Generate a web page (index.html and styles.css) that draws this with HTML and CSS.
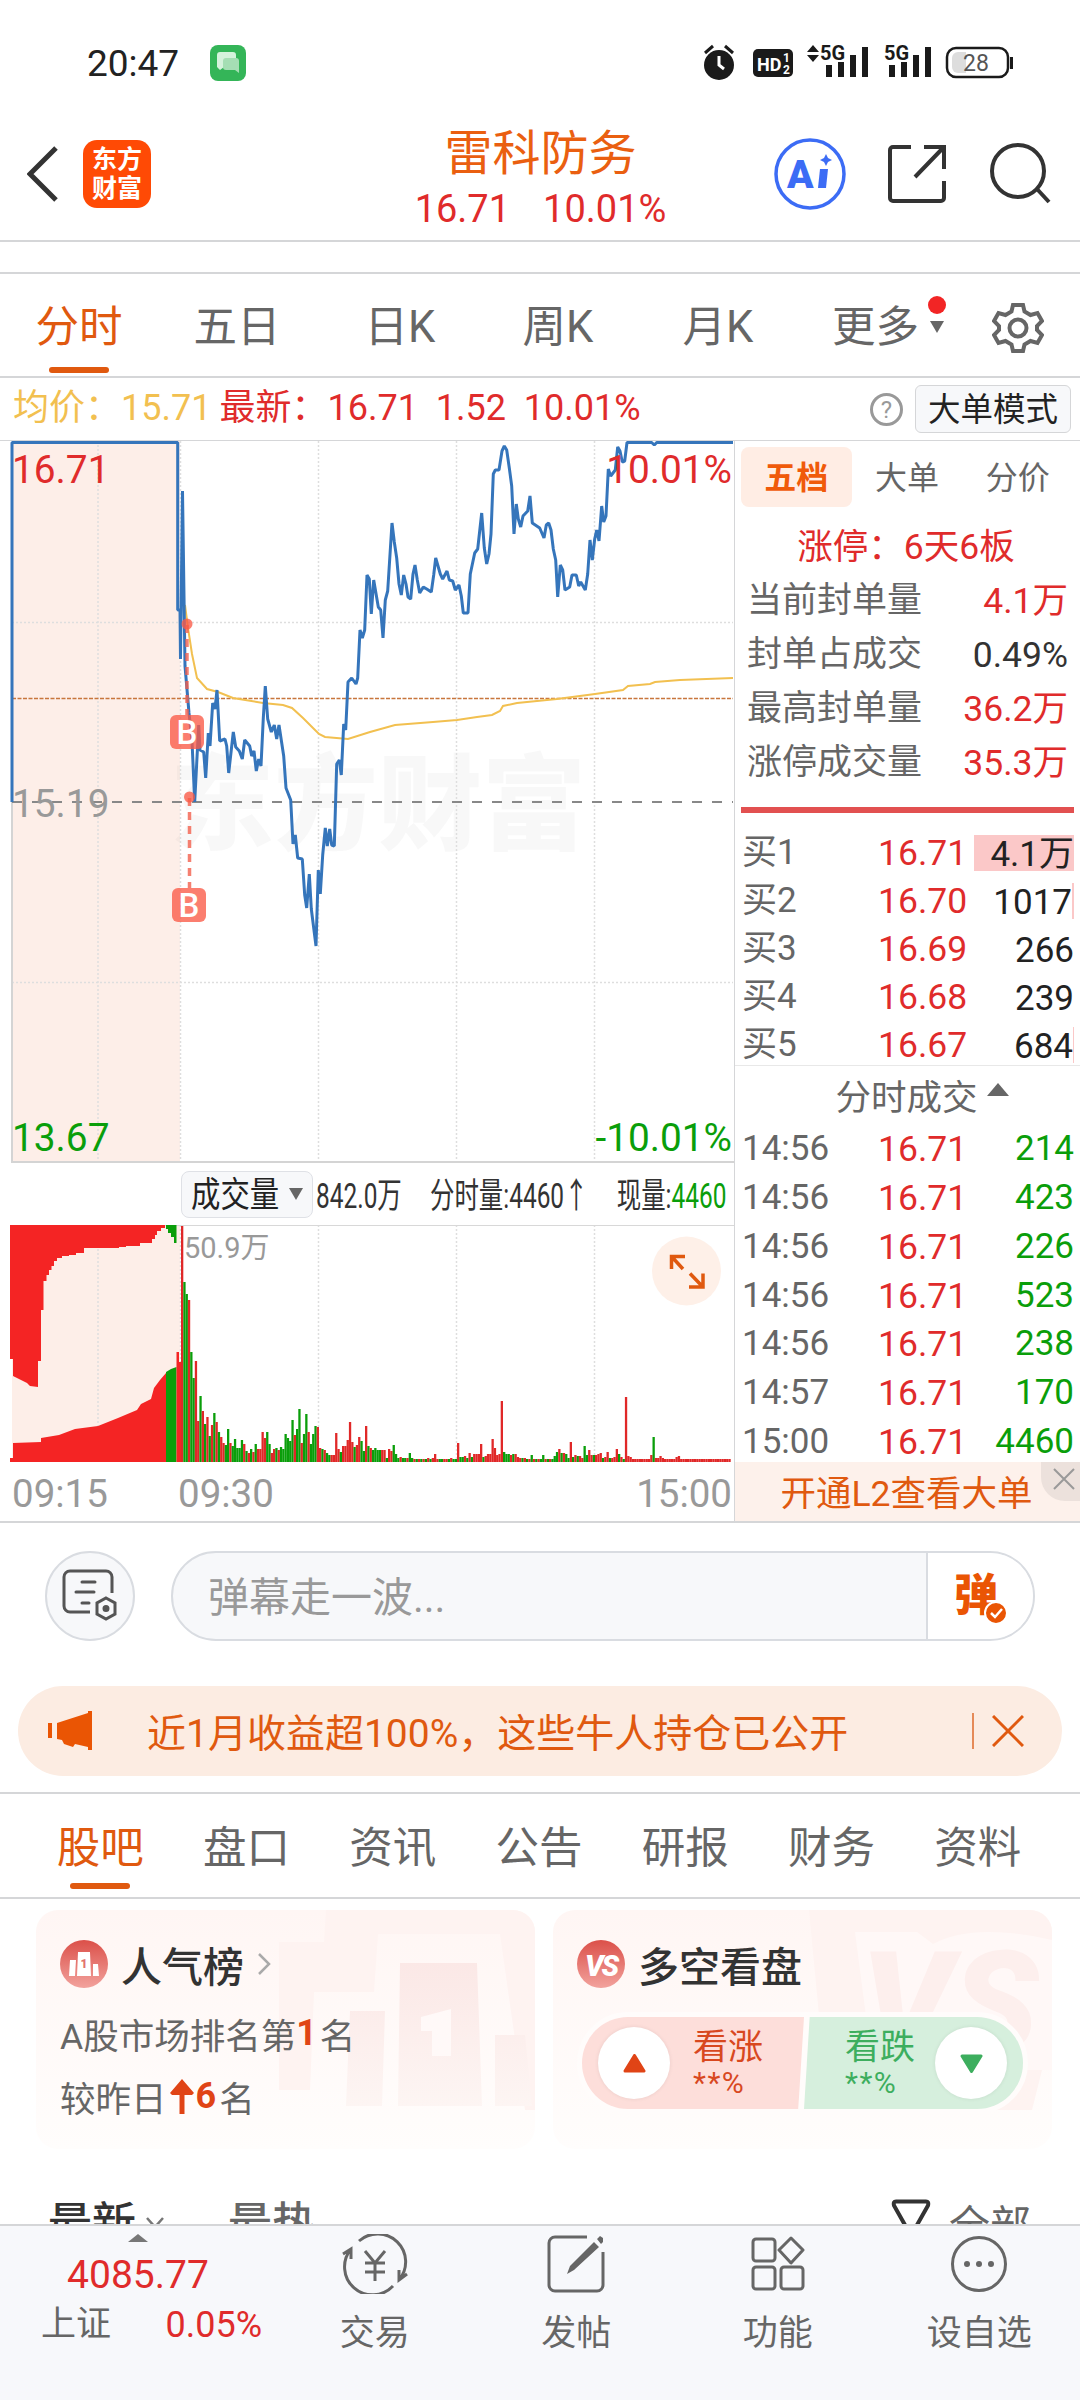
FILE: index.html
```html
<!DOCTYPE html>
<html lang="zh-CN">
<head>
  <meta charset="UTF-8" />
  <meta name="viewport" content="width=device-width, initial-scale=1.0" />
  <title>雷科防务 16.71 10.01%</title>
  <link rel="stylesheet" href="styles.css">
</head>
<body>

  <!-- Status bar -->
  <div class="status">
    <span class="status-time">20:47</span>
    <svg class="status-msg" width="36" height="36" viewBox="0 0 36 36">
      <rect width="36" height="36" rx="8" fill="#34b558"/>
      <path d="M10 7h13a3 3 0 0 1 3 3v9a3 3 0 0 1-3 3H14l-4 3-3-3V10a3 3 0 0 1 3-3z" fill="#d5f2dc"/>
      <path d="M16 13h10a3 3 0 0 1 3 3v12l-4-3h-9a3 3 0 0 1-3-3v-6a3 3 0 0 1 3-3z" fill="#a5deb4"/>
    </svg>
    <svg class="status-icons" width="312" height="44" viewBox="0 0 312 44">
      <g fill="#1a1a1a">
        <circle cx="18" cy="24" r="15"/>
        <path d="M4 12l8-7M24 5l8 7" stroke="#1a1a1a" stroke-width="3"/>
        <path d="M18 15v9l5 4" stroke="#fff" stroke-width="3" fill="none"/>
        <rect x="52" y="8" width="40" height="28" rx="5"/>
        <path d="M106 11l6-7 6 7zM106 14l6 7 6-7z"/>
        <path d="M125 24h6v12h-6zM137 21h6v15h-6zM149 14h6v22h-6zM161 6h6v30h-6z"/>
        <path d="M188 24h6v12h-6zM200 21h6v15h-6zM212 14h6v22h-6zM224 6h6v30h-6z"/>
        <text x="119" y="19" class="sig">5G</text>
        <text x="183" y="19" class="sig">5G</text>
        <rect x="309" y="16" width="3" height="12"/>
      </g>
      <text x="56" y="30" class="hd">HD</text>
      <text x="82" y="21" class="hd hd-sm">1</text>
      <text x="82" y="33" class="hd hd-sm">2</text>
      <rect x="246" y="7" width="61" height="29" rx="9" fill="#fff" stroke="#1a1a1a" stroke-width="2.5"/>
      <path d="M257 11h8v21h-8a6 6 0 0 1-6-6v-9a6 6 0 0 1 6-6z" fill="#ddd"/>
      <text x="262" y="30" class="batt">28</text>
    </svg>
  </div>

  <!-- Title bar -->
  <header class="header">
    <svg class="back" width="32" height="56" viewBox="0 0 32 56"><path d="M29 2L3 28l26 26" fill="none" stroke="#333" stroke-width="5"/></svg>
    <div class="brand">东方<br>财富</div>
    <div class="stock">
      <h1>雷科防务</h1>
      <p><span>16.71</span><span>10.01%</span></p>
    </div>
    <svg class="ai" width="72" height="72" viewBox="0 0 72 72">
      <circle cx="36" cy="36" r="34" fill="#fff" stroke="#3c6cf5" stroke-width="3.5"/>
      <text x="13" y="50">A</text>
      <path d="M46 31h8l-2 19h-8z" fill="#3c6cf5"/>
      <path d="M52 16l2 4 4 2-4 2-2 4-2-4-4-2 4-2z" fill="#3c6cf5"/>
    </svg>
    <svg class="share" width="58" height="58" viewBox="0 0 58 58"><path d="M23 2H5a3 3 0 0 0-3 3v48a3 3 0 0 0 3 3h48a3 3 0 0 0 3-3V36M36 2h20v22M55 3L27 32" fill="none" stroke="#333" stroke-width="4"/></svg>
    <svg class="search" width="62" height="62" viewBox="0 0 62 62"><circle cx="28" cy="28" r="26" fill="none" stroke="#333" stroke-width="4"/><path d="M47 46l12 13" stroke="#333" stroke-width="4"/></svg>
  </header>

  <div class="strip"></div>

  <nav class="period">
    <a class="on">分时</a>
    <a>五日</a>
    <a>日K</a>
    <a>周K</a>
    <a>月K</a>
    <a class="more">更多<i class="caret"></i><i class="dot"></i></a>
    <a class="gear">
      <svg width="52" height="52" viewBox="0 0 52 52" fill="none" stroke="#666" stroke-width="4">
        <path d="M21 3h10l1.500 6.500 6 3.500 7-2 4.500 8-5 5v4l5 5-4.500 8-7-2-6 3.500L31 49H21l-1.500-6.500-6-3.500-7 2L2 33l5-5v-4l-5-5 4.500-8 7 2 6-3.500z"/>
        <circle cx="26" cy="26" r="8.500"/>
      </svg>
    </a>
  </nav>

  <div class="quote">
    <span class="avg">均价：15.71</span>
    <span class="last">最新：16.71&nbsp; 1.52&nbsp; 10.01%</span>
    <span class="help">?</span>
    <span class="mode">大单模式</span>
  </div>

  <main class="board">
    <section class="charts">
      <svg class="price" width="734" height="722" viewBox="0 0 734 722">
        <rect x="12" y="0" width="168" height="721" fill="#fdeee8"/>
        <text x="170" y="401" class="wm">东方财富</text>
        <g class="grid">
          <path d="M98 0v721M180.500 0v721M318.500 0v721M456.500 0v721M594.500 0v721M12 181.500h721M12 541.500h721"/>
        </g>
        <path d="M11 721h723M12 361v360" stroke="#d4d4d4" stroke-width="2"/>
        <path d="M12 361h721" stroke="#888" stroke-width="2" stroke-dasharray="10 10"/>
        <path d="M12 257.500h721" stroke="#c8763c" stroke-width="1.300" stroke-dasharray="4 1.500"/>
        <polyline fill="none" stroke="#f2c050" stroke-width="2" points="185,164 188,187 192,213 197,237 207,248 218,251 233,257 263,262 283,264 292,267 303,277 313,287 319,293 325,296 348,298 370,291 395,284 433,281 457,279 477,276 492,274 500,270 503,265 517,262 557,258 595,253 623,249 628,245 650,243 655,241 680,239 733,237"/>
        <polyline class="line" points="12,361 12,1.500 177.700,1.500 177.700,169 180,169 180.500,218 182.500,50 185,225 189,272 192,300 194.700,361 198.700,284 200,309 203.700,311 205.700,337 208.300,292 210,305 212.700,262 215,268 217,249 219.700,300 225,298 226.700,305 228.700,332 233.300,291 235.700,306 239.300,310 242.300,318 244.700,299 249.700,305 251.700,315 254,310 256.300,330 258.700,318 261,325 263.300,277 265.300,245 267.700,278 271.300,291 274.300,284 276.700,298 279,284 283.700,315 286,347 290.700,359 293,403 295.300,394 297.700,417 302.300,418 304.700,454 306.700,467 309.300,433 311.300,468 316,505 318.300,429 320.300,453 322.700,414 325.300,387 327.300,405 329.700,388 331.700,404 334.300,405 336.700,323 339.300,319 341.300,334 343.700,283 345.700,289 348,241 351.700,237 356,243 357.700,237 360,189 362.300,197 364.700,189 367,134 369.300,138 371.300,173 373.700,139 378.300,166 380.700,169 383,197 385.300,159 387.700,150 392,82 394.300,101 396.700,117 399,143 401.300,154 403.700,134 406,143 408,156 410.700,158 413,133 415,124 417.300,139 419.700,152 423.300,146 426.700,148 431.300,151 433.700,134 435.700,117 440.300,133 442.700,138 447,130 449.300,139 452.700,140 455.300,149 459,144 461.300,155 463.300,172 468,172 470.300,133 474.700,112 477.700,108 481.700,72 484.300,107 486.700,123 489,113 491,93 493.300,33 495.300,29 499,29 502,10 504.300,5 506.700,9 509.300,27 511.700,45 514,93 516.300,63 518.300,78 520.700,86 523,75 527.700,70 530,55 532.300,82 539.700,87 544,97 546.300,84 548.700,82 551,89 553.300,108 555.700,119 557.700,156 560.300,124 562.700,129 565,149 569.700,146 572,134 576.300,134 578.700,145 580.700,141 585.300,149 587.700,133 590,99 592.300,119 594.700,98 596.700,89 599,100 601.700,65 603.700,81 606,75 608.300,28 610.700,35 615.300,29 617.700,6 620,10 622.300,21 624.700,20 627,1.500 651.700,1.500 654.300,4 656.700,1.500 733,1.500"/>
        <g fill="#fa5a46" fill-opacity=".78">
          <path d="M187 184v90M189.500 357v90" stroke="#f2604e" stroke-opacity=".8" stroke-width="3.500" stroke-dasharray="8 6"/>
          <circle cx="187" cy="183" r="5.500"/>
          <circle cx="189.500" cy="356" r="5.500"/>
          <rect x="170" y="274" width="34" height="34" rx="6"/>
          <rect x="172" y="447" width="34" height="34" rx="6"/>
        </g>
        <text x="187" y="303" class="buy">B</text>
        <text x="189" y="476" class="buy">B</text>
        <text x="12" y="42" class="axis up">16.71</text>
        <text x="12" y="376" class="axis flat">15.19</text>
        <text x="12" y="710" class="axis down">13.67</text>
        <text x="732" y="42" class="axis up end">10.01%</text>
        <text x="732" y="710" class="axis down end">-10.01%</text>
      </svg>

      <div class="vol-head">
        <span class="vol-pick"><b>成交量</b><i class="caret"></i></span>
        <p class="vol-nums"><span>842.0万</span><span>分时量:4460<em>↑</em></span><span>现量:<b>4460</b></span></p>
      </div>

      <svg class="volume" width="734" height="238" viewBox="0 0 734 238">
        <rect x="12" y="0" width="168" height="237" fill="#fdeee8"/>
        <g class="grid"><path d="M98 0v237M180.500 0v237M318.500 0v237M456.500 0v237M594.500 0v237"/></g>
        <path d="M12 .5h722" stroke="#d8d8d8"/>
        <path fill="#f42424" d="M10 0V134h3v17l6 3 8 4 3 3 8 1v-26h3V85h2.500V56h3v-6h2.500v-5h2.500v-4h2.500v-5h3v-3h5v-2h7v-1h7v-2h8v-5h35v-1h7v-1h14v-3h12v-4h3V10h2V6h4V3h4V0z"/>
        <path fill="#f42424" d="M10 237v-4h3v-15l28-1v-4l18-3 16-6 23-3 20-8 19-8 4-6 10-5 3-11 6-8 6-7v89z"/>
        <path fill="#0a9e0a" d="M166 0h10.500v18H174v-6h-3V8h-3V4h-2zM166 237v-90l5-3 5.500-2v95z"/>
        <path fill="#f42424" d="M176.500 127h2.500v10h2v100h-4.500z"/>
        <g id="bars"></g>
        <text x="184" y="33" class="vmax">50.9万</text>
        <circle cx="686.500" cy="46" r="34.500" fill="#fef0e8"/>
        <path d="M671.500 44V31.500H685M672 32l11 12M703 48.500V62h-14M702 61l-12-12.500" fill="none" stroke="#e0590f" stroke-width="3.500"/>
      </svg>

      <div class="times"><span>09:15</span><span>09:30</span><span>15:00</span></div>
    </section>

    <aside class="side">
      <div class="side-tabs"><a class="on">五档</a><a>大单</a><a>分价</a></div>
      <p class="limit">涨停：6天6板</p>
      <dl class="facts">
        <div><dt>当前封单量</dt><dd>4.1万</dd></div>
        <div><dt>封单占成交</dt><dd class="dark">0.49%</dd></div>
        <div><dt>最高封单量</dt><dd>36.2万</dd></div>
        <div><dt>涨停成交量</dt><dd>35.3万</dd></div>
      </dl>
      <div class="split"></div>
      <ul class="bids">
        <li><span>买1</span><span>16.71</span><span class="w1">4.1万</span></li>
        <li><span>买2</span><span>16.70</span><span class="w2">1017</span></li>
        <li><span>买3</span><span>16.69</span><span>266</span></li>
        <li><span>买4</span><span>16.68</span><span>239</span></li>
        <li><span>买5</span><span>16.67</span><span class="w5">684</span></li>
      </ul>
      <p class="deal-title">分时成交<i></i></p>
      <ul class="deals">
        <li><span>14:56</span><span>16.71</span><span>214</span></li>
        <li><span>14:56</span><span>16.71</span><span>423</span></li>
        <li><span>14:56</span><span>16.71</span><span>226</span></li>
        <li><span>14:56</span><span>16.71</span><span>523</span></li>
        <li><span>14:56</span><span>16.71</span><span>238</span></li>
        <li><span>14:57</span><span>16.71</span><span>170</span></li>
        <li><span>15:00</span><span>16.71</span><span>4460</span></li>
      </ul>
      <div class="l2">开通L2查看大单
        <span class="l2-close"><svg width="22" height="22" viewBox="0 0 22 22"><path d="M1 1l20 20M21 1L1 21" stroke="#999" stroke-width="2"/></svg></span>
      </div>
    </aside>
  </main>

  <!-- Bullet comment input -->
  <div class="danmu">
    <span class="danmu-set">
      <svg width="56" height="54" viewBox="0 0 56 54" fill="none" stroke="#555" stroke-width="3">
        <path d="M28 43H8a6 6 0 0 1-6-6V8a6 6 0 0 1 6-6h36a6 6 0 0 1 6 6v16"/>
        <path d="M20 13h13M14 23h18M20 34h7" stroke-linecap="round"/>
        <path d="M44 29l9 5v11l-9 5-9-5V34z"/>
        <circle cx="44" cy="39.500" r="2" fill="#555"/>
      </svg>
    </span>
    <div class="danmu-box">
      <span class="danmu-hint">弹幕走一波...</span>
      <span class="danmu-go">弹<svg width="24" height="24" viewBox="0 0 24 24"><circle cx="12" cy="12" r="11" fill="#ea5504" stroke="#fff" stroke-width="2"/><path d="M7 12l4 4 7-8" fill="none" stroke="#fff" stroke-width="2.500"/></svg></span>
    </div>
  </div>

  <div class="notice">
    <svg width="46" height="40" viewBox="0 0 46 40" fill="#ea5504"><path d="M0 12h4v15H0zM9 12L40 2V0h4v39h-4v-3l-13-3-2 3-9-3-2-4-5-1z"/></svg>
    <span class="notice-text">近1月收益超100%，这些牛人持仓已公开</span>
    <i class="bar"></i>
    <svg width="32" height="32" viewBox="0 0 32 32"><path d="M1 1l30 30M31 1L1 31" stroke="#e0590f" stroke-width="3"/></svg>
  </div>

  <nav class="sections">
    <a class="on">股吧</a><a>盘口</a><a>资讯</a><a>公告</a><a>研报</a><a>财务</a><a>资料</a>
  </nav>

  <div class="cards">
    <section class="card">
      <svg class="card-bg" width="499" height="239" viewBox="0 0 499 239">
        <defs><linearGradient id="fade" x1="0" y1="0" x2="0" y2="1"><stop offset="0" stop-color="#fbe8e6"/><stop offset="1" stop-color="#fdf5f3"/></linearGradient></defs>
        <path d="M290 0h209v200h-10L464 24H342l-4 58h-60l-4 98h-31V32h45z" fill="#fef3f1"/>
        <path d="M314 101h35l-3 95h-36zM364 53h77l5 143h-84zM459 125h30l7 71h-37z" fill="url(#fade)"/>
        <path d="M385 107l30-8v47h-19v-25h-11z" fill="#fff9f8"/>
      </svg>
      <h2>
        <svg width="48" height="48" viewBox="0 0 48 48">
          <defs><linearGradient id="badge" x1="0" y1="0" x2="0" y2="1"><stop offset="0" stop-color="#db5049"/><stop offset="1" stop-color="#f2a29d"/></linearGradient></defs>
          <circle cx="24" cy="24" r="24" fill="url(#badge)"/>
          <path d="M10 20h6l-1 16H9zM18 12h12l1 24H17zM33 24h5l1 12h-6z" fill="#fff"/>
          <text x="24" y="27.500" class="one">1</text>
        </svg>
        人气榜
        <svg width="14" height="24" viewBox="0 0 14 24"><path d="M2 2l10 10L2 22" fill="none" stroke="#aaa" stroke-width="2.500"/></svg>
      </h2>
      <p>A股市场排名第<b>1</b>名</p>
      <p>较昨日<svg width="24" height="35" viewBox="0 0 24 35"><path d="M12 0l12 14-2 2H14.500v19h-5V16H2l-2-2z" fill="#e04416"/></svg><b>6</b>名</p>
    </section>

    <section class="card">
      <svg class="card-bg" width="499" height="239" viewBox="0 0 499 239">
        <path d="M256 0h243v120l-20 80H275z" fill="#fef3f1"/>
        <path d="M302 22h62l16 12q40-22 119-4v70l20 60H320z" fill="#fff8f7"/>
        <text x="308" y="143" class="vs-bg">VS</text>
      </svg>
      <h2>
        <svg width="48" height="48" viewBox="0 0 48 48"><circle cx="24" cy="24" r="24" fill="url(#badge)"/><text x="24" y="36" class="vs">VS</text></svg>
        多空看盘
      </h2>
      <div class="vote">
        <div class="bull">
          <span class="knob"><svg width="23" height="19" viewBox="0 0 23 19"><path d="M11.500 1.500L21 17H2z" fill="#e04416" stroke="#e04416" stroke-width="3" stroke-linejoin="round"/></svg></span>
          <p><span>看涨</span><small>**%</small></p>
        </div>
        <div class="bear">
          <p><span>看跌</span><small>**%</small></p>
          <span class="knob"><svg width="23" height="19" viewBox="0 0 23 19"><path d="M11.500 17.500L21 2H2z" fill="#3dae5e" stroke="#3dae5e" stroke-width="3" stroke-linejoin="round"/></svg></span>
        </div>
      </div>
    </section>
  </div>

  <div class="feed">
    <b>最新</b>
    <svg class="feed-more" width="18" height="14" viewBox="0 0 18 14"><path d="M1 2l8 9 8-9" fill="none" stroke="#777" stroke-width="2.500"/></svg>
    <b class="dim">最热</b>
    <svg class="funnel" width="40" height="44" viewBox="0 0 40 44"><path d="M5 2.500h30q3 0 2 4L26 26v16h-12V26L3 6.500q-1-4 2-4z" fill="none" stroke="#333" stroke-width="4"/></svg>
    <span>全部</span>
  </div>

  <footer class="dock">
    <div class="index">
      <i></i>
      <strong>4085.77</strong>
      <p><span>上证</span><em>0.05%</em></p>
    </div>
    <a>
      <svg width="68" height="60" viewBox="0 0 68 60" fill="none" stroke="#666" stroke-width="3">
        <path d="M18 7A28 28 0 0 1 58 46M52 52A28 28 0 0 1 10 15M2 20l8-5v10M66 40l-8 6V36"/>
        <path d="M24 17l10 12 10-12M34 29v18M24 29h20M24 38h20"/>
      </svg>
      交易
    </a>
    <a>
      <svg width="58" height="60" viewBox="0 0 58 60" fill="none" stroke="#666" stroke-width="3">
        <path d="M40 3H8a6 6 0 0 0-6 6v42a6 6 0 0 0 6 6h42a6 6 0 0 0 6-6V18"/>
        <path d="M47 8l5 5-25 23-7 4 3-8zM50 5l3-3 3 2v4l-2 2z" fill="#666" stroke="none"/>
      </svg>
      发帖
    </a>
    <a>
      <svg width="54" height="60" viewBox="0 0 54 60" fill="none" stroke="#666" stroke-width="3">
        <rect x="2" y="5" width="22" height="22" rx="3"/><path d="M40 4l12 12-12 13-12-13z" stroke-linejoin="round"/>
        <rect x="2" y="33" width="22" height="22" rx="3"/><rect x="30" y="33" width="22" height="22" rx="3"/>
      </svg>
      功能
    </a>
    <a>
      <svg width="58" height="60" viewBox="0 0 58 60" fill="#666">
        <circle cx="29" cy="30" r="26.500" fill="none" stroke="#666" stroke-width="3"/>
        <circle cx="17" cy="30" r="3"/><circle cx="29" cy="30" r="3"/><circle cx="41" cy="30" r="3"/>
      </svg>
      设自选
    </a>
  </footer>

  <script src="script.js"></script>
</body>
</html>
```

FILE: styles.css
```css
/* ===== Variables ===== */
:root {
  --up: #e02b2b;
  --down: #0a9e0a;
  --accent: #e0590f;
  --text: #333;
  --muted: #666;
  --line: #d5d6d8;
  --soft: #f7f8fa;
}

*, *::before, *::after { box-sizing: border-box; margin: 0; padding: 0; }
body {
  width: 1080px;
  height: 2400px;
  overflow: hidden;
  display: flex;
  flex-direction: column;
  font-family: Roboto, "Noto Sans CJK SC", sans-serif;
  font-size: 35px;
  color: var(--muted);
  background: #fff;
}
ul { list-style: none; }
i, em { font-style: normal; }
svg { display: block; flex: none; }
svg text { font-family: Roboto, "Noto Sans CJK SC", sans-serif; }

/* Status bar */
.status {
  height: 126px;
  display: flex;
  align-items: center;
  padding: 0 67px 0 87px;
  flex: none;
}
.status-time { font-size: 37px; color: #222; width: 123px; }
.status-icons { margin-left: auto; }
.sig { font-size: 20px; font-weight: 700; }
.hd { font-size: 18px; font-weight: 700; fill: #fff; }
.hd-sm { font-size: 12px; }
.batt { font-size: 23px; fill: #555; }

/* Title bar */
.header {
  height: 116px;
  flex: none;
  display: flex;
  align-items: center;
  padding: 0 28px 18px 27px;
  border-bottom: 2px solid var(--line);
}
.brand {
  width: 68px;
  height: 68px;
  margin-left: 24px;
  border-radius: 14px;
  background: #ff4a05;
  color: #fff;
  font-size: 25px;
  font-weight: 700;
  line-height: 29px;
  text-align: center;
  padding-top: 5px;
}
.stock { flex: 1; text-align: center; margin-left: 156px; margin-top: 12px; }
.stock h1 { font-size: 48px; font-weight: 400; line-height: 58px; color: #ea5f10; }
.stock p { display: flex; justify-content: center; gap: 33px; font-size: 38px; line-height: 52px; color: var(--up); }
.ai text { font-size: 39px; font-weight: 900; fill: #3c6cf5; }
.share { margin-left: 42px; }
.search { margin-left: 44px; }
.strip { height: 32px; flex: none; border-bottom: 2px solid var(--line); }

/* Period tabs */
.period {
  height: 104px;
  flex: none;
  display: grid;
  grid-template-columns: 158px 158px 168px 148px 172px 168px 92px;
  font-size: 43.500px;
  line-height: 107px;
  text-align: center;
  border-bottom: 2px solid var(--line);
}
.period a, .sections a { position: relative; }
.period .on, .sections .on { color: var(--accent); }
.period .on::after, .sections .on::after {
  content: "";
  position: absolute;
  left: 50%;
  bottom: 8px;
  width: 60px;
  height: 6px;
  margin-left: -30px;
  border-radius: 3px;
  background: var(--accent);
}
.caret {
  display: inline-block;
  border: 7px solid transparent;
  border-top: 12px solid var(--muted);
  border-bottom: 0;
}
.more .caret { margin: 0 0 9px 11px; }
.dot {
  position: absolute;
  right: 26px;
  top: 22px;
  width: 18px;
  height: 18px;
  border-radius: 50%;
  background: #f22525;
}
.gear { display: flex; align-items: center; justify-content: center; }

/* Quote line */
.quote {
  height: 63px;
  flex: none;
  display: flex;
  align-items: center;
  padding: 0 9px 0 13px;
  font-size: 36px;
  border-bottom: 1px solid var(--line);
}
.avg, .last { line-height: 60px; padding-bottom: 3px; }
.avg { color: #f2c050; margin-right: 8px; }
.last { color: var(--up); }
.help {
  width: 33px;
  height: 33px;
  margin-left: auto;
  border: 3px solid #999;
  border-radius: 50%;
  font-size: 24px;
  line-height: 28px;
  text-align: center;
  color: #999;
}
.mode {
  width: 156px;
  height: 48px;
  margin-left: 12px;
  border: 1px solid var(--line);
  border-radius: 6px;
  background: var(--soft);
  color: #222;
  font-size: 32.500px;
  line-height: 48px;
  text-align: center;
}

/* Charts */
.board { height: 1082px; flex: none; display: flex; border-bottom: 2px solid var(--line); }
.charts { width: 735px; border-right: 1px solid var(--line); }
.grid { stroke: #dedede; stroke-width: 1.500; stroke-dasharray: 2 2; }
.line { fill: none; stroke: #3575bb; stroke-width: 3; stroke-linejoin: bevel; }
.wm { font-size: 104px; font-weight: 900; fill: #888; fill-opacity: .06; }
.axis { font-size: 38.800px; }
.axis.up { fill: var(--up); }
.axis.down { fill: var(--down); }
.axis.flat { fill: #999; }
.axis.end { text-anchor: end; }
.buy { font-size: 33px; font-weight: 500; fill: #fff; text-anchor: middle; }
.vmax { font-size: 29px; fill: #999; }

.vol-head { height: 62px; display: flex; align-items: center; padding-left: 181px; }
.vol-pick {
  width: 132px;
  height: 47px;
  padding-left: 9px;
  display: flex;
  align-items: center;
  border: 1px solid #dfe1e6;
  border-radius: 8px;
  background: var(--soft);
}
.vol-pick b { width: 98px; font-weight: 400; line-height: 43px; padding-top: 2px; color: #222; transform: scaleX(.84); transform-origin: left; white-space: nowrap; }
/* the figures are squeezed so they fit in one row */
.vol-nums {
  width: 588px;
  flex: none;
  margin: -3px -180px 0 3px;
  display: flex;
  justify-content: space-between;
  color: var(--text);
  transform: scaleX(.698);
  transform-origin: left;
  white-space: nowrap;
}
.vol-nums b { font-weight: 400; color: var(--down); }
.times { display: grid; grid-template-columns: 166px 1fr auto; padding: 0 2px 0 12px; font-size: 38.500px; line-height: 62px; color: #999; }

/* Order book */
.side { flex: 1; position: relative; }
.side-tabs { display: flex; padding: 6px 7px 0 6px; font-size: 32px; text-align: center; }
.side-tabs a { flex: 1; height: 60px; line-height: 63px; border-radius: 8px; }
.side-tabs .on { background: #ffede4; color: #f05a0a; font-weight: 700; }
.limit { margin-top: 16px; font-size: 35.500px; line-height: 48px; text-align: center; color: var(--up); padding-right: 3px; }
.facts { padding: 3px 12px 0 12px; }
.facts div { display: flex; justify-content: space-between; line-height: 54px; }
.facts dd { color: var(--up); font-size: 35.500px; }
.facts .dark { color: var(--text); }
.split { height: 6px; margin: 17px 6px 16px; background: #e25050; }
.bids li, .deals li { display: grid; grid-template-columns: 136px 91px 1fr; padding: 0 6px 0 7px; line-height: 48px; }
.bids span:nth-child(2), .deals span:nth-child(2) { color: var(--up); font-size: 35.500px; }
.bids span:last-child, .deals span:last-child { text-align: right; color: #222; }
.bids span:last-child { line-height: 40px; height: 36px; align-self: center; margin-left: 5px; }
.bids .w1 { background: #fbc8c8; }
.w2 { border-right: 2px solid #fbc8c8; }
.w5 { border-right: 1px solid #fbc8c8; }
.deal-title {
  margin-top: -4px;
  height: 58px;
  padding-left: 29px;
  display: flex;
  align-items: center;
  justify-content: center;
  gap: 9px;
  border-top: 1px solid #e8e8e8;
  font-size: 35.500px;
}
.deal-title i { border: 11px solid transparent; border-top: 0; border-bottom: 13px solid var(--muted); margin-bottom: 10px; }
.deals { padding-top: 2px; }
.deals li { line-height: 48.850px; }
.deals li span:last-child { color: var(--down); }
.l2 {
  position: absolute;
  left: 0;
  right: 0;
  bottom: 0;
  height: 59px;
  background: #fdf1eb;
  color: var(--accent);
  font-size: 35.500px;
  line-height: 65px;
  text-align: center;
  padding-right: 2px;
}
.l2-close { position: absolute; right: 0; top: 0; width: 39px; height: 39px; padding: 6px 0 0 12px; border-bottom-left-radius: 24px; background: #ece1dc; }

/* Bullet comments */
.danmu { display: flex; gap: 36px; padding: 28px 45px 0; height: 163px; flex: none; }
.danmu-set { width: 90px; height: 90px; display: flex; align-items: center; justify-content: center; border: 2px solid #d9dce1; border-radius: 50%; background: var(--soft); }
.danmu-box { flex: 1; height: 90px; display: flex; overflow: hidden; border: 2px solid #d9dce1; border-radius: 45px; background: var(--soft); line-height: 90px; }
.danmu-hint { flex: 1; padding-left: 35px; font-size: 41px; color: #999; }
.danmu-go { position: relative; width: 107px; padding-left: 26px; border-left: 2px solid #d9dce1; background: #fff; font-size: 44px; font-weight: 900; line-height: 86px; color: #ea5504; }
.danmu-go svg { position: absolute; left: 56px; top: 48px; }

.notice { height: 90px; flex: none; margin: 0 18px; padding: 0 38px 0 30px; display: flex; align-items: center; border-radius: 45px; background: #fcece2; color: var(--accent); font-size: 39px; }
.notice-text { margin-left: 53px; padding-bottom: 3px; flex: 1; white-space: nowrap; }
.notice .bar { width: 2px; height: 36px; margin-right: 18px; background: #e58a58; }

/* Section tabs */
.sections {
  height: 107px;
  margin-top: 16px;
  flex: none;
  display: flex;
  padding: 0 29px 0 27px;
  font-size: 43.500px;
  line-height: 109px;
  text-align: center;
  border-top: 2px solid var(--line);
  border-bottom: 2px solid var(--line);
}
.sections a { flex: 1; }

/* Cards */
.cards { display: flex; gap: 18px; padding: 11px 28px 0 36px; flex: none; }
.card { position: relative; flex: 1; height: 239px; padding: 25px 0 0 24px; overflow: hidden; border-radius: 22px; background: linear-gradient(#fff6f4, #fffdfc); }
.card > * { position: relative; }
.card > .card-bg { position: absolute; left: 0; top: 0; }
.card h2 { display: flex; align-items: center; gap: 13px; height: 58px; font-size: 41px; font-weight: 500; color: var(--text); }
.card > p { display: flex; align-items: center; height: 50px; margin-top: 15px; font-size: 35.500px; }
.card > p + p { margin-top: 13px; }
.card > p svg { margin: 0 2px 0 3px; }
.card > p b { font-size: 36px; color: #e04416; padding-right: 3px; }
.one { font-size: 12px; font-weight: 900; fill: #e2736d; text-anchor: middle; }
.vs { font-size: 29px; font-weight: 900; font-style: italic; letter-spacing: -2px; fill: #fff; text-anchor: middle; }
.vs-bg { font-size: 142px; font-weight: 900; font-style: italic; fill: #fdefed; }

.vote { display: flex; width: 451px; height: 102px; margin: 19px 0 0; border: 5px solid #fffcfb; border-radius: 51px; background: #fffcfb; overflow: hidden; }
.vote > div { display: flex; align-items: center; }
.bull { width: 222px; padding-left: 16px; gap: 23px; background: #fddeda; color: #d8481f; clip-path: polygon(0 0, 100% 0, 97.400% 100%, 0 100%); }
.bear { flex: 1; gap: 20px; padding-left: 41px; background: #d6efdd; color: #3dae5e; clip-path: polygon(2.600% 0, 100% 0, 100% 100%, 0 100%); }
.vote p { display: flex; flex-direction: column; }
.vote p span { line-height: 44px; }
.vote small { font-size: 30px; line-height: 34px; letter-spacing: 1.500px; margin-top: -4px; }
.knob { width: 72px; height: 72px; display: flex; align-items: center; justify-content: center; border-radius: 50%; background: #fff; box-shadow: 0 0 4px rgba(0, 0, 0, .08); }

/* Feed header, cut off by the dock */
.feed { height: 75px; flex: none; overflow: hidden; display: flex; align-items: flex-start; padding: 47px 49px 0 48px; font-size: 41px; line-height: 60px; }
.feed b { font-size: 44px; font-weight: 500; line-height: 56px; color: var(--text); }
.feed .dim { color: var(--muted); margin-left: 64px; }
.feed-more { margin: 20px 0 0 10px; }
.funnel { margin: 3px 18px 0 auto; }

/* Bottom dock */
.dock { flex: 1; display: flex; border-top: 2px solid var(--line); background: #f7f8fb; }
.dock a { width: 201.500px; display: flex; flex-direction: column; align-items: center; gap: 13px; padding-top: 8px; font-size: 35px; line-height: 53px; }
.index { width: 274px; text-align: center; }
.index i { display: block; width: 0; margin: 8px 0 0 128px; border: 10px solid transparent; border-top: 0; border-bottom: 8px solid #777; }
.index strong { display: block; margin-top: 8px; padding-left: 2px; font-size: 39px; font-weight: 400; line-height: 50px; color: var(--up); }
.index p { display: flex; justify-content: space-between; padding: 0 12px 0 41px; line-height: 50px; }
.index em { color: var(--up); font-size: 36px; }
```

FILE: script.js
```js
// Minute volume bars from 09:30: r = up, g = down, then the bar height
const volumes = `
r236 g180 g168 r162 g110 g84 r101 r41 g66 r51 g38 r45 g26 r37 g49 r40 g30 r25 r19 g17
g33 r19 g16 g23 g14 g14 g22 r18 g11 r9 g13 r10 g18 r13 r13 r30 r24 g30 g18 r9
r13 g14 r12 g15 g13 g28 g24 g21 g42 r27 g33 g53 r19 g28 g48 r30 g18 g28 g36 r35
r14 g13 r12 g9 g7 r7 r7 r29 r13 g10 r16 r16 r22 r40 r20 g15 r17 r25 g21 g11
r36 g16 r14 g12 g14 g12 g12 r12 r12 g4 r13 r11 g17 g8 g4 r5 g4 g4 r4 g9
g4 r3 g3 r3 g3 r3 g3 r4 g3 r4 r8 r3 g3 g3 r3 r3 g3 r4 g3 g3
r19 g5 g5 r6 g4 r9 g5 r8 r8 r8 r18 g5 r6 r8 r8 r23 r14 r7 r8 r61
g10 g8 g8 r7 g8 r8 r5 r4 g4 r4 g3 r3 g7 r3 g3 r3 g3 g7 r3 g3
r3 g3 g6 g10 r13 g9 r9 g8 g4 r20 g5 r7 g6 r6 r4 g16 g7 r12 r7 g7
r7 r8 r9 g4 r5 r10 g4 r4 r5 r13 g8 r5 g3 r65 r6 r5 r3 r3 r3 r3
r3 r3 r3 r3 r7 g25 r4 r4 r6 r4 r3 r3 r3 r3 r3 r5 r6 r3 r3 r3
r3 r3 r3 r3 r3 r3 r3 r3 r3 r3 r3 r3 r3 r3 r3 r3 r3 r3 r3`.trim().split(/\s+/);

const bars = document.getElementById('bars');
volumes.forEach((item, i) => {
  const h = Number(item.slice(1));
  const bar = document.createElementNS('http://www.w3.org/2000/svg', 'rect');
  bar.setAttribute('x', 181 + i * 2.3);
  bar.setAttribute('y', 237 - h);
  bar.setAttribute('width', 2.3);
  bar.setAttribute('height', h);
  bar.setAttribute('fill', item[0] === 'r' ? '#e02828' : '#0a9e0a');
  bars.appendChild(bar);
});
```
